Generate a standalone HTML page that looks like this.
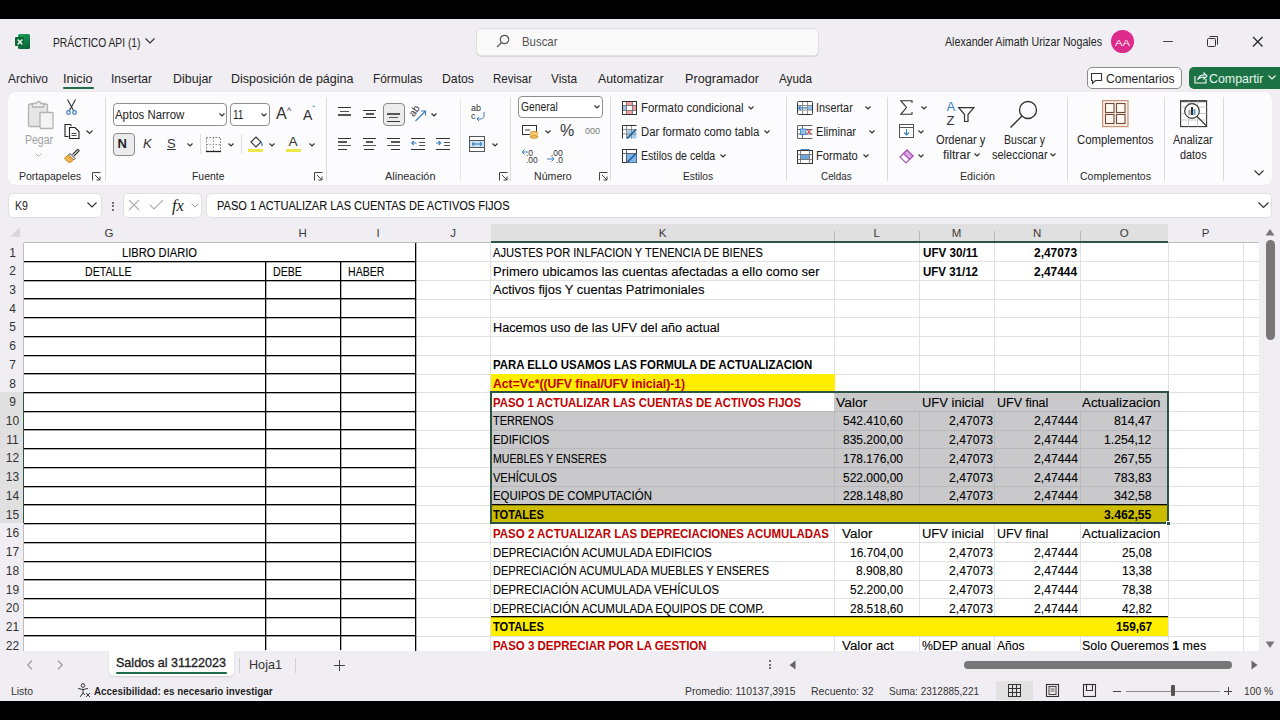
<!DOCTYPE html><html><head><meta charset="utf-8"><style>
*{margin:0;padding:0;box-sizing:border-box}
html,body{width:1280px;height:720px;overflow:hidden;background:#000;font-family:"Liberation Sans",sans-serif;color:#1f1f1f;position:relative}
.a{position:absolute}
.t{position:absolute;white-space:nowrap}
.menu{font-size:13px;color:#242424}
.sep{position:absolute;width:1px;background:#dcdcdc;top:97px;height:84px}
.glab{font-size:11.5px;color:#2b2b2b}
.rt{font-size:12px;color:#242424}
.chev{position:absolute;width:4px;height:4px;border-right:1px solid #555;border-bottom:1px solid #555;transform:rotate(45deg)}
.cell{font-size:12.5px;color:#000;-webkit-text-stroke:0.1px #000}
.b{font-weight:bold;-webkit-text-stroke:0}
.red{color:#c00000}
.sx{display:inline-block;transform-origin:0 50%}
.hdr{position:absolute;top:224px;height:18px;font-size:11.5px;line-height:18px;text-align:center;color:#3a3a3a}
.rn{position:absolute;left:1px;width:23px;font-size:12px;text-align:center;color:#333;line-height:20px}
svg{position:absolute;overflow:visible}
</style></head><body><div class="a" style="left:0;top:19px;width:1280px;height:682px;background:#f0eef2"></div><div class="a" style="left:18px;top:34px;width:12px;height:14.6px;background:linear-gradient(160deg,#1f9a5c 0%,#138a4e 35%,#0f7240 70%,#0b5a30 100%);border-radius:1.5px"></div><div class="a" style="left:15px;top:37px;width:9.2px;height:9px;background:#0c6636;border-radius:1px"></div><svg style="left:17px;top:38.8px" width="6" height="6"><path d="M0.6 0.4L5.4 5.6M5.4 0.4L0.6 5.6" stroke="#e8fff2" stroke-width="1.5"/></svg><div class="t" style="left:52.5px;top:34.5px;line-height:16px;font-size:13px;color:#242424"><span id="f0" class="sx" style="transform:scaleX(0.7916)">PRÁCTICO API (1)</span></div><svg style="left:145px;top:38px" width="10" height="6"><path d="M0.5 0.5L5 5L9.5 0.5" fill="none" stroke="#333" stroke-width="1.2"/></svg><div class="a" style="left:476px;top:27.5px;width:343px;height:28.5px;background:#f9f9f9;border:1px solid #e0e0e0;border-radius:5px;box-shadow:0 1px 0 #d6d6d6"></div><svg style="left:496px;top:34px" width="14" height="14"><circle cx="8.5" cy="5.5" r="4.2" fill="none" stroke="#555" stroke-width="1.2"/><line x1="5.5" y1="8.5" x2="1" y2="13" stroke="#555" stroke-width="1.3"/></svg><div class="t" style="left:522px;top:34px;line-height:16px;font-size:13px;color:#555"><span id="f1" class="sx" style="transform:scaleX(0.8772)">Buscar</span></div><div class="t" style="left:945px;top:34px;line-height:16px;font-size:12.5px;color:#242424"><span id="f2" class="sx" style="transform:scaleX(0.8527)">Alexander Aimath Urizar Nogales</span></div><div class="a" style="left:1111px;top:30px;width:23px;height:23px;border-radius:50%;background:#dd2a8b"></div><div class="t" style="left:1115px;top:35px;line-height:16px;font-size:9.5px;color:#fff"><span id="f3" class="sx" style="transform:scaleX(1.1823)">AA</span></div><div class="a" style="left:1163px;top:40.5px;width:9.5px;height:1.5px;background:#444"></div><div class="a" style="left:1207px;top:38px;width:9px;height:9px;border:1px solid #333;border-radius:1.5px"></div><div class="a" style="left:1209px;top:36px;width:9px;height:9px;border-top:1px solid #333;border-right:1px solid #333;border-radius:1.5px"></div><svg style="left:1253px;top:36.5px" width="10" height="10"><path d="M0 0L9.5 9.5M9.5 0L0 9.5" stroke="#222" stroke-width="1.2"/></svg><div class="t" style="left:8px;top:71px;line-height:16px;font-size:13px;color:#242424"><span id="f4" class="sx" style="transform:scaleX(0.9225)">Archivo</span></div><div class="t" style="left:63px;top:71px;line-height:16px;font-size:13px;color:#242424"><span id="f5" class="sx" style="transform:scaleX(0.9717)">Inicio</span></div><div class="t" style="left:111px;top:71px;line-height:16px;font-size:13px;color:#242424"><span id="f6" class="sx" style="transform:scaleX(0.9302)">Insertar</span></div><div class="t" style="left:172.5px;top:71px;line-height:16px;font-size:13px;color:#242424"><span id="f7" class="sx" style="transform:scaleX(0.9590)">Dibujar</span></div><div class="t" style="left:231px;top:71px;line-height:16px;font-size:13px;color:#242424"><span id="f8" class="sx" style="transform:scaleX(0.9630)">Disposición de página</span></div><div class="t" style="left:373px;top:71px;line-height:16px;font-size:13px;color:#242424"><span id="f9" class="sx" style="transform:scaleX(0.9135)">Fórmulas</span></div><div class="t" style="left:442px;top:71px;line-height:16px;font-size:13px;color:#242424"><span id="f10" class="sx" style="transform:scaleX(0.9420)">Datos</span></div><div class="t" style="left:493px;top:71px;line-height:16px;font-size:13px;color:#242424"><span id="f11" class="sx" style="transform:scaleX(0.8848)">Revisar</span></div><div class="t" style="left:551px;top:71px;line-height:16px;font-size:13px;color:#242424"><span id="f12" class="sx" style="transform:scaleX(0.9068)">Vista</span></div><div class="t" style="left:598px;top:71px;line-height:16px;font-size:13px;color:#242424"><span id="f13" class="sx" style="transform:scaleX(0.9441)">Automatizar</span></div><div class="t" style="left:685px;top:71px;line-height:16px;font-size:13px;color:#242424"><span id="f14" class="sx" style="transform:scaleX(0.9753)">Programador</span></div><div class="t" style="left:779px;top:71px;line-height:16px;font-size:13px;color:#242424"><span id="f15" class="sx" style="transform:scaleX(0.9006)">Ayuda</span></div><div class="a" style="left:63px;top:86.5px;width:31px;height:2.5px;background:#1e6b45;border-radius:1px"></div><div class="a" style="left:1087px;top:67px;width:95px;height:21.5px;background:#fff;border:1px solid #8a8a8a;border-radius:5px"></div><svg style="left:1091px;top:72.5px" width="11" height="11"><path d="M0.5 0.5H10.5V7.5H4.5L1.5 10.5V7.5H0.5Z" fill="none" stroke="#333" stroke-width="1.1"/></svg><div class="t" style="left:1106px;top:71px;line-height:16px;font-size:13px;color:#242424"><span id="f16" class="sx" style="transform:scaleX(0.9294)">Comentarios</span></div><div class="a" style="left:1189px;top:67px;width:95px;height:21.5px;background:#1b7245;border-radius:5px"></div><svg style="left:1194px;top:71px" width="14" height="13"><path d="M1 5V12H12V8M4 8C5 5 8 4 10 4V2L13 5L10 8V6C8 6 6 6.5 4 8Z" fill="none" stroke="#fff" stroke-width="1.1"/></svg><div class="t" style="left:1209px;top:71px;line-height:16px;font-size:13px;color:#e6f7ec"><span id="f17" class="sx" style="transform:scaleX(0.9548)">Compartir</span></div><svg style="left:1268px;top:75px" width="8" height="5"><path d="M0.5 0.5L4 4L7.5 0.5" fill="none" stroke="#fff" stroke-width="1.1"/></svg><div class="a" style="left:7.5px;top:92px;width:1264.5px;height:93.3px;background:#fcfbfd;border-radius:7px;box-shadow:0 0 1px 0 #d0d0d0"></div><div class="sep" style="left:104.5px"></div><div class="sep" style="left:325.5px"></div><div class="sep" style="left:510px"></div><div class="sep" style="left:610px"></div><div class="sep" style="left:785.5px"></div><div class="sep" style="left:886.5px"></div><div class="sep" style="left:1066.5px"></div><div class="sep" style="left:1163.5px"></div><div class="sep" style="left:1222.5px"></div><div class="sep" style="left:459.5px;top:100px;height:80px;background:#e4e4e4"></div><div class="t" style="left:19.25px;top:169px;line-height:14px;font-size:11.5px;color:#2b2b2b"><span id="f18" class="sx" style="transform:scaleX(0.9147)">Portapapeles</span></div><div class="t" style="left:191.75px;top:169px;line-height:14px;font-size:11.5px;color:#2b2b2b"><span id="f19" class="sx" style="transform:scaleX(0.9075)">Fuente</span></div><div class="t" style="left:385px;top:169px;line-height:14px;font-size:11.5px;color:#2b2b2b"><span id="f20" class="sx" style="transform:scaleX(0.9514)">Alineación</span></div><div class="t" style="left:534.25px;top:169px;line-height:14px;font-size:11.5px;color:#2b2b2b"><span id="f21" class="sx" style="transform:scaleX(0.9228)">Número</span></div><div class="t" style="left:683.25px;top:169px;line-height:14px;font-size:11.5px;color:#2b2b2b"><span id="f22" class="sx" style="transform:scaleX(0.8856)">Estilos</span></div><div class="t" style="left:821.25px;top:169px;line-height:14px;font-size:11.5px;color:#2b2b2b"><span id="f23" class="sx" style="transform:scaleX(0.8586)">Celdas</span></div><div class="t" style="left:959.7px;top:169px;line-height:14px;font-size:11.5px;color:#2b2b2b"><span id="f24" class="sx" style="transform:scaleX(0.9279)">Edición</span></div><div class="t" style="left:1080px;top:169px;line-height:14px;font-size:11.5px;color:#2b2b2b"><span id="f25" class="sx" style="transform:scaleX(0.9180)">Complementos</span></div><svg style="left:92px;top:171.5px" width="9" height="9"><path d="M0.5 8.5V0.5H8.5M3 3L8 8M8 4.5V8H4.5" fill="none" stroke="#444" stroke-width="1"/></svg><svg style="left:314px;top:171.5px" width="9" height="9"><path d="M0.5 8.5V0.5H8.5M3 3L8 8M8 4.5V8H4.5" fill="none" stroke="#444" stroke-width="1"/></svg><svg style="left:499px;top:171.5px" width="9" height="9"><path d="M0.5 8.5V0.5H8.5M3 3L8 8M8 4.5V8H4.5" fill="none" stroke="#444" stroke-width="1"/></svg><svg style="left:599px;top:171.5px" width="9" height="9"><path d="M0.5 8.5V0.5H8.5M3 3L8 8M8 4.5V8H4.5" fill="none" stroke="#444" stroke-width="1"/></svg><svg style="left:27px;top:99px" width="28" height="31"><rect x="1.5" y="5" width="19" height="22.5" rx="1.5" fill="#e6e6e6" stroke="#b3b3b3" stroke-width="1.3"/><path d="M5.5 8V4.5H9.5A2 2 0 0 1 13.5 4.5H16.5V8Z" fill="#f2f2f2" stroke="#b3b3b3" stroke-width="1.3"/><rect x="13" y="13.5" width="13" height="16" rx="0.8" fill="#f3f3f3" stroke="#b3b3b3" stroke-width="1.3"/></svg><div class="t" style="left:24.5px;top:133px;line-height:14px;font-size:12px;color:#a0a0a0"><span id="f26" class="sx" style="transform:scaleX(0.8741)">Pegar</span></div><svg style="left:35px;top:153px" width="7" height="4"><path d="M0.5 0.5L3.5 3.5L6.5 0.5" fill="none" stroke="#aaa" stroke-width="1"/></svg><svg style="left:65px;top:99px" width="13" height="17"><path d="M2.5 0.5L8.5 11.5M10.5 0.5L4.5 11.5" stroke="#333" stroke-width="1.1" fill="none"/><circle cx="3.5" cy="13.5" r="1.8" fill="none" stroke="#3a7fc1" stroke-width="1.2"/><circle cx="9.5" cy="13.5" r="1.8" fill="none" stroke="#3a7fc1" stroke-width="1.2"/></svg><svg style="left:63.5px;top:123.5px" width="16" height="16"><path d="M4.5 12.5H1V0.5H6.5L7.5 2" fill="none" stroke="#222" stroke-width="1.1"/><path d="M5.5 3.5H11L15 7.5V14.5H5.5Z" fill="#fff" stroke="#222" stroke-width="1.1"/><path d="M7.5 9.5H12.5M7.5 11.5H12.5" stroke="#333" stroke-width="0.9"/></svg><svg style="left:85.5px;top:130px" width="7" height="4"><path d="M0.5 0.5L3.5 3.5L6.5 0.5" fill="none" stroke="#333" stroke-width="1.1"/></svg><svg style="left:64px;top:148px" width="16" height="15"><path d="M8.5 6.5L13.5 1.5A1.2 1.2 0 0 1 15 3L10 8" fill="#fff" stroke="#333" stroke-width="1.1"/><path d="M6 5.5L11 10.5L9.5 12L4.5 7Z" fill="#fff" stroke="#333" stroke-width="1"/><path d="M0.5 10L4.5 7L9.5 12L6.5 14.5C4 14.5 1.5 12.5 0.5 10Z" fill="#f0b44a" stroke="#c98a2a" stroke-width="0.9"/></svg><div class="a" style="left:112.5px;top:103px;width:114.5px;height:23px;background:#fff;border:1px solid #8f8f8f;border-radius:4px"></div><div class="t" style="left:115px;top:107px;line-height:16px;font-size:12.5px;color:#242424"><span id="f27" class="sx" style="transform:scaleX(0.9144)">Aptos Narrow</span></div><svg style="left:218.5px;top:113.3px" width="6" height="4"><path d="M0.5 0.5L3 3L5.5 0.5" fill="none" stroke="#333" stroke-width="1.2"/></svg><div class="a" style="left:230px;top:103px;width:39.5px;height:23px;background:#fff;border:1px solid #8f8f8f;border-radius:4px"></div><div class="t" style="left:232.5px;top:107px;line-height:16px;font-size:12.5px;color:#242424"><span id="f28" class="sx" style="transform:scaleX(0.8087)">11</span></div><svg style="left:260.5px;top:113.3px" width="6" height="4"><path d="M0.5 0.5L3 3L5.5 0.5" fill="none" stroke="#333" stroke-width="1.2"/></svg><div class="t" style="left:276px;top:105px;font-size:16px;line-height:18px;color:#333">A</div><div class="t" style="left:287px;top:106px;font-size:9px;line-height:10px;color:#333">^</div><div class="t" style="left:303px;top:107px;font-size:14px;line-height:16px;color:#333">A</div><div class="t" style="left:312px;top:106px;font-size:10px;line-height:10px;color:#3a7fc1">ˇ</div><div class="a" style="left:112.5px;top:133px;width:22px;height:22.5px;background:#ececec;border:1px solid #8a8a8a;border-radius:4px"></div><div class="t" style="left:117.5px;top:136px;font-size:13px;line-height:16px;font-weight:bold;color:#222">N</div><div class="t" style="left:143px;top:136px;font-size:13px;line-height:16px;font-style:italic;color:#333">K</div><div class="t" style="left:167px;top:136px;font-size:13px;line-height:16px;text-decoration:underline;color:#333">S</div><svg style="left:186.5px;top:143.3px" width="6" height="4"><path d="M0.5 0.5L3 3L5.5 0.5" fill="none" stroke="#333" stroke-width="1.2"/></svg><div class="a" style="left:200px;top:134px;width:1px;height:20px;background:#ddd"></div><svg style="left:206px;top:137px" width="15" height="15"><rect x="0.5" y="0.5" width="14" height="14" fill="none" stroke="#777" stroke-width="1" stroke-dasharray="1.5 1.5"/><path d="M7.5 0.5V14.5M0.5 7.5H14.5" stroke="#999" stroke-width="1" stroke-dasharray="1.5 1.5"/><path d="M0 14.5H15" stroke="#222" stroke-width="1.3"/></svg><svg style="left:227.5px;top:143.3px" width="6" height="4"><path d="M0.5 0.5L3 3L5.5 0.5" fill="none" stroke="#333" stroke-width="1.2"/></svg><div class="a" style="left:241px;top:134px;width:1px;height:20px;background:#ddd"></div><svg style="left:248px;top:136px" width="16" height="14"><path d="M3 6L8 1L13 6L8 11Z" fill="#fff" stroke="#333" stroke-width="1.1"/><path d="M13 6C14.5 8 14.5 9 13.5 10" stroke="#3a7fc1" stroke-width="1.2" fill="none"/></svg><div class="a" style="left:247.5px;top:148.5px;width:15.5px;height:3.5px;background:#ece84a"></div><svg style="left:268.5px;top:143.3px" width="6" height="4"><path d="M0.5 0.5L3 3L5.5 0.5" fill="none" stroke="#333" stroke-width="1.2"/></svg><div class="t" style="left:288.5px;top:133.5px;font-size:13.5px;line-height:16px;color:#333">A</div><div class="a" style="left:285.5px;top:148.5px;width:15.5px;height:3.5px;background:#ece84a"></div><svg style="left:308.5px;top:143.3px" width="6" height="4"><path d="M0.5 0.5L3 3L5.5 0.5" fill="none" stroke="#333" stroke-width="1.2"/></svg><div class="a" style="left:338px;top:106.6px;width:13px;height:1.4px;background:#333"></div><div class="a" style="left:340px;top:110.5px;width:9px;height:1.4px;background:#555"></div><div class="a" style="left:338px;top:114.3px;width:13px;height:1.4px;background:#555"></div><div class="a" style="left:362.7px;top:109.7px;width:13.3px;height:1.4px;background:#333"></div><div class="a" style="left:366px;top:113.3px;width:8px;height:1.4px;background:#555"></div><div class="a" style="left:362.7px;top:116.9px;width:13.3px;height:1.4px;background:#333"></div><div class="a" style="left:382.5px;top:103px;width:22px;height:22.5px;background:#ececec;border:1px solid #8a8a8a;border-radius:4px"></div><div class="a" style="left:387px;top:113.3px;width:13px;height:1.4px;background:#555"></div><div class="a" style="left:389px;top:116.9px;width:9px;height:1.4px;background:#555"></div><div class="a" style="left:387px;top:120.7px;width:13px;height:1.4px;background:#333"></div><div class="t" style="left:409px;top:106px;font-size:10px;line-height:10px;color:#333;transform:rotate(-55deg)">ab</div><svg style="left:415px;top:110px" width="12" height="12"><path d="M0.5 11L10.5 1M6 1H10.5V5.5" fill="none" stroke="#3a7fc1" stroke-width="1.1"/></svg><svg style="left:431px;top:113.3px" width="6" height="4"><path d="M0.5 0.5L3 3L5.5 0.5" fill="none" stroke="#333" stroke-width="1.2"/></svg><div class="a" style="left:338px;top:137.6px;width:13px;height:1.4px;background:#333"></div><div class="a" style="left:338px;top:141.35px;width:9px;height:1.4px;background:#555"></div><div class="a" style="left:338px;top:145.1px;width:13px;height:1.4px;background:#555"></div><div class="a" style="left:338px;top:148.85px;width:9px;height:1.4px;background:#333"></div><div class="a" style="left:362.7px;top:137.6px;width:13.3px;height:1.4px;background:#333"></div><div class="a" style="left:365.7px;top:141.35px;width:7.5px;height:1.4px;background:#555"></div><div class="a" style="left:362.7px;top:145.1px;width:13.3px;height:1.4px;background:#555"></div><div class="a" style="left:364.2px;top:148.85px;width:9.5px;height:1.4px;background:#333"></div><div class="a" style="left:387px;top:137.6px;width:13px;height:1.4px;background:#333"></div><div class="a" style="left:391px;top:141.35px;width:9px;height:1.4px;background:#555"></div><div class="a" style="left:387px;top:145.1px;width:13px;height:1.4px;background:#555"></div><div class="a" style="left:391px;top:148.85px;width:9px;height:1.4px;background:#333"></div><div class="a" style="left:411px;top:137.6px;width:13.5px;height:1.4px;background:#333"></div><div class="a" style="left:419px;top:141.5px;width:5.5px;height:1.4px;background:#555"></div><div class="a" style="left:419px;top:145px;width:5.5px;height:1.4px;background:#555"></div><div class="a" style="left:411px;top:148.8px;width:13.5px;height:1.4px;background:#333"></div><svg style="left:410.5px;top:139.5px" width="6" height="6"><path d="M5.5 3H0.8M2.8 1L0.8 3L2.8 5" fill="none" stroke="#3a7fc1" stroke-width="1.1"/></svg><div class="a" style="left:436px;top:137.6px;width:13.5px;height:1.4px;background:#333"></div><div class="a" style="left:444px;top:141.5px;width:5.5px;height:1.4px;background:#555"></div><div class="a" style="left:444px;top:145px;width:5.5px;height:1.4px;background:#555"></div><div class="a" style="left:436px;top:148.8px;width:13.5px;height:1.4px;background:#333"></div><svg style="left:435.5px;top:139.5px" width="6" height="6"><path d="M0 3H4.7M2.7 1L4.7 3L2.7 5" fill="none" stroke="#3a7fc1" stroke-width="1.1"/></svg><div class="t" style="left:471px;top:104px;font-size:9px;line-height:9px;color:#333">ab</div><div class="t" style="left:471px;top:112px;font-size:9px;line-height:9px;color:#333">c</div><svg style="left:476px;top:112px" width="10" height="10"><path d="M8 0V4C8 6 6 7 4 7H1M3 5L1 7L3 9" fill="none" stroke="#3a7fc1" stroke-width="1"/></svg><svg style="left:469px;top:136px" width="16" height="16"><rect x="0.5" y="0.5" width="15" height="15" fill="#fff" stroke="#555" stroke-width="1"/><path d="M0.5 4.5H15.5M0.5 11.5H15.5" stroke="#555"/><rect x="1" y="5" width="14" height="6" fill="#cfe3f5"/><path d="M3 8H13M5 6L3 8L5 10M11 6L13 8L11 10" fill="none" stroke="#1f6fb5" stroke-width="1"/></svg><svg style="left:491.5px;top:143.3px" width="6" height="4"><path d="M0.5 0.5L3 3L5.5 0.5" fill="none" stroke="#333" stroke-width="1.2"/></svg><div class="a" style="left:518px;top:96px;width:85px;height:21.5px;background:#fff;border:1px solid #8f8f8f;border-radius:4px"></div><div class="t" style="left:521.25px;top:99px;line-height:16px;font-size:12.5px;color:#242424"><span id="f29" class="sx" style="transform:scaleX(0.8261)">General</span></div><svg style="left:593.5px;top:105.3px" width="6" height="4"><path d="M0.5 0.5L3 3L5.5 0.5" fill="none" stroke="#333" stroke-width="1.2"/></svg><svg style="left:522px;top:124px" width="17" height="14"><rect x="0.5" y="1.5" width="14" height="9" fill="#fff" stroke="#333" stroke-width="1"/><path d="M3 6H8" stroke="#333"/><ellipse cx="12" cy="9" rx="4" ry="1.5" fill="#f6c870" stroke="#c98a1f" stroke-width="0.8"/><rect x="8" y="9" width="8" height="4" fill="#f6c870"/><ellipse cx="12" cy="13" rx="4" ry="1.3" fill="#f6c870" stroke="#c98a1f" stroke-width="0.8"/></svg><svg style="left:544.5px;top:130.3px" width="6" height="4"><path d="M0.5 0.5L3 3L5.5 0.5" fill="none" stroke="#333" stroke-width="1.2"/></svg><div class="t" style="left:560px;top:122px;font-size:16px;line-height:18px;color:#333">%</div><div class="t" style="left:585px;top:126px;font-size:9px;line-height:10px;color:#777">000</div><div class="t" style="left:526px;top:149px;font-size:8.5px;line-height:8px;color:#333">.0</div><div class="t" style="left:526px;top:156px;font-size:8.5px;line-height:8px;color:#333">.00</div><svg style="left:521px;top:148px" width="8" height="8"><path d="M7 4H1M3.5 1.5L1 4L3.5 6.5" fill="none" stroke="#3a7fc1" stroke-width="1"/></svg><div class="t" style="left:551px;top:149px;font-size:8.5px;line-height:8px;color:#333">.00</div><div class="t" style="left:556px;top:156px;font-size:8.5px;line-height:8px;color:#333">.0</div><svg style="left:547px;top:155px" width="9" height="8"><path d="M0 4H7M4.5 1.5L7 4L4.5 6.5" fill="none" stroke="#3a7fc1" stroke-width="1"/></svg><svg style="left:622px;top:100.5px" width="15" height="14"><rect x="0.5" y="0.5" width="14" height="13" fill="#fff"/><rect x="4.5" y="0.5" width="6" height="4" fill="#f0a0a0"/><rect x="4.5" y="9.5" width="6" height="4" fill="#f0a0a0"/><rect x="0.5" y="4.5" width="4" height="5" fill="#9cc3e6"/><rect x="10.5" y="4.5" width="4" height="5" fill="#f0a0a0"/><path d="M0.5 4.5H14.5M0.5 9.5H14.5M4.5 0.5V13.5M10.5 0.5V13.5" stroke="#666" stroke-width="0.8"/><rect x="0.5" y="0.5" width="14" height="13" fill="none" stroke="#333"/></svg><div class="t" style="left:641.25px;top:100px;line-height:16px;font-size:12.5px;color:#242424"><span id="f30" class="sx" style="transform:scaleX(0.9106)">Formato condicional</span></div><svg style="left:747.5px;top:106.3px" width="6" height="4"><path d="M0.5 0.5L3 3L5.5 0.5" fill="none" stroke="#333" stroke-width="1.2"/></svg><svg style="left:622px;top:124.5px" width="15" height="14"><rect x="0.5" y="0.5" width="14" height="13" fill="#fff"/><rect x="5" y="5" width="9.5" height="8.5" fill="#a9cdee"/><path d="M0.5 4.5H14.5M0.5 9H14.5M4.5 0.5V13.5M9.5 0.5V13.5" stroke="#777" stroke-width="0.8"/><path d="M0.5 13.5V0.5H14.5" fill="none" stroke="#333"/><path d="M5 13.5L14 4.5" stroke="#1f5f99" stroke-width="1.6"/></svg><div class="t" style="left:641.25px;top:124px;line-height:16px;font-size:12.5px;color:#242424"><span id="f31" class="sx" style="transform:scaleX(0.9054)">Dar formato como tabla</span></div><svg style="left:763.5px;top:130.3px" width="6" height="4"><path d="M0.5 0.5L3 3L5.5 0.5" fill="none" stroke="#333" stroke-width="1.2"/></svg><svg style="left:622px;top:148.5px" width="15" height="14"><rect x="0.5" y="0.5" width="14" height="13" fill="#fff" stroke="#333"/><rect x="4.5" y="4.5" width="10" height="9" fill="#7fb2e5"/><path d="M4.5 0.5V13.5M0.5 4.5H14.5" stroke="#555" stroke-width="0.9"/><path d="M5 13.5L14 4.5" stroke="#1f5f99" stroke-width="1.6"/></svg><div class="t" style="left:641.25px;top:148px;line-height:16px;font-size:12.5px;color:#242424"><span id="f32" class="sx" style="transform:scaleX(0.8480)">Estilos de celda</span></div><svg style="left:719.5px;top:154.3px" width="6" height="4"><path d="M0.5 0.5L3 3L5.5 0.5" fill="none" stroke="#333" stroke-width="1.2"/></svg><svg style="left:797px;top:100.5px" width="16" height="14"><rect x="0.5" y="0.5" width="15" height="13" fill="#fff"/><rect x="10.5" y="4.5" width="5" height="4.5" fill="#8fc0ea"/><path d="M0.5 4.5H15.5M0.5 9H15.5M5.5 0.5V13.5M10.5 0.5V13.5" stroke="#777" stroke-width="0.8"/><rect x="0.5" y="0.5" width="15" height="13" rx="1" fill="none" stroke="#333"/><path d="M10 6.8H1.5M4 4.3L1.5 6.8L4 9.3" fill="none" stroke="#3a7fc1" stroke-width="1.2"/></svg><div class="t" style="left:816.25px;top:100px;line-height:16px;font-size:12.5px;color:#242424"><span id="f33" class="sx" style="transform:scaleX(0.8669)">Insertar</span></div><svg style="left:864.5px;top:106.3px" width="6" height="4"><path d="M0.5 0.5L3 3L5.5 0.5" fill="none" stroke="#333" stroke-width="1.2"/></svg><svg style="left:797px;top:124.5px" width="16" height="14"><path d="M0.5 0.5H15.5M0.5 13.5H15.5M0.5 4.5H15.5M0.5 9H15.5M0.5 0.5V13.5M5.5 0.5V13.5" stroke="#555" stroke-width="0.9"/><rect x="3.5" y="4" width="5.5" height="5.5" fill="#8fc0ea" stroke="#3a7fc1" stroke-width="0.8"/><path d="M10 4.5L14 9M14 4.5L10 9" stroke="#d13438" stroke-width="1.1"/></svg><div class="t" style="left:816.25px;top:124px;line-height:16px;font-size:12.5px;color:#242424"><span id="f34" class="sx" style="transform:scaleX(0.8858)">Eliminar</span></div><svg style="left:868.5px;top:130.3px" width="6" height="4"><path d="M0.5 0.5L3 3L5.5 0.5" fill="none" stroke="#333" stroke-width="1.2"/></svg><svg style="left:797px;top:148.5px" width="16" height="15"><rect x="0.5" y="1.5" width="15" height="13" fill="#fff" stroke="#333"/><rect x="3.5" y="5.5" width="9" height="5" fill="#6fa8dc"/><path d="M0.5 5.5H15.5M0.5 10.5H15.5M3.5 1.5V14.5M12.5 1.5V14.5" stroke="#666" stroke-width="0.8"/><path d="M3.5 0.5H12.5" stroke="#3a7fc1" stroke-width="0.9"/></svg><div class="t" style="left:816.25px;top:148px;line-height:16px;font-size:12.5px;color:#242424"><span id="f35" class="sx" style="transform:scaleX(0.8969)">Formato</span></div><svg style="left:862.5px;top:154.3px" width="6" height="4"><path d="M0.5 0.5L3 3L5.5 0.5" fill="none" stroke="#333" stroke-width="1.2"/></svg><svg style="left:900px;top:100px" width="13" height="15"><path d="M12 3V0.7H0.8L6.5 7.5L0.8 14.3H12V12" fill="none" stroke="#333" stroke-width="1.1"/></svg><svg style="left:920.5px;top:106.3px" width="6" height="4"><path d="M0.5 0.5L3 3L5.5 0.5" fill="none" stroke="#333" stroke-width="1.2"/></svg><svg style="left:899px;top:124px" width="15" height="14"><rect x="0.5" y="0.5" width="14" height="13" fill="#fff" stroke="#555"/><path d="M0.5 3.5H14.5" stroke="#555"/><path d="M7.5 5V11M5 8.5L7.5 11L10 8.5" fill="none" stroke="#3a7fc1" stroke-width="1.1"/></svg><svg style="left:917.5px;top:130.3px" width="6" height="4"><path d="M0.5 0.5L3 3L5.5 0.5" fill="none" stroke="#333" stroke-width="1.2"/></svg><svg style="left:899px;top:148px" width="16" height="15"><path d="M1 9L8 2L14 8L7 15Z" fill="#fff" stroke="#a34fb5" stroke-width="1.1"/><path d="M4.5 5.5L10.5 11.5L14 8L8 2Z" fill="#dca6e6" stroke="#a34fb5" stroke-width="1.1"/></svg><svg style="left:917.5px;top:154.3px" width="6" height="4"><path d="M0.5 0.5L3 3L5.5 0.5" fill="none" stroke="#333" stroke-width="1.2"/></svg><div class="t" style="left:946.5px;top:100px;font-size:13px;line-height:13px;color:#3a7fc1">A</div><div class="t" style="left:946.5px;top:114px;font-size:13px;line-height:13px;color:#333">Z</div><svg style="left:958px;top:107px" width="17" height="16"><path d="M0.7 0.7H15.8L10 7.5V14.5H6.5V7.5Z" fill="none" stroke="#333" stroke-width="1.2"/></svg><div class="t" style="left:936.25px;top:132px;line-height:16px;font-size:12.5px;color:#242424"><span id="f36" class="sx" style="transform:scaleX(0.8877)">Ordenar y</span></div><div class="t" style="left:942.5px;top:147px;line-height:16px;font-size:12.5px;color:#242424"><span id="f37" class="sx" style="transform:scaleX(0.9899)">filtrar</span></div><svg style="left:973.5px;top:153.3px" width="6" height="4"><path d="M0.5 0.5L3 3L5.5 0.5" fill="none" stroke="#333" stroke-width="1.2"/></svg><svg style="left:1009px;top:100px" width="30" height="29"><circle cx="19" cy="10" r="8.5" fill="none" stroke="#333" stroke-width="1.3"/><path d="M13 16L1.5 27.5" stroke="#333" stroke-width="1.4"/></svg><div class="t" style="left:1004px;top:132px;line-height:16px;font-size:12.5px;color:#242424"><span id="f38" class="sx" style="transform:scaleX(0.8429)">Buscar y</span></div><div class="t" style="left:991.6px;top:147px;line-height:16px;font-size:12.5px;color:#242424"><span id="f39" class="sx" style="transform:scaleX(0.8793)">seleccionar</span></div><svg style="left:1049.5px;top:153.3px" width="6" height="4"><path d="M0.5 0.5L3 3L5.5 0.5" fill="none" stroke="#333" stroke-width="1.2"/></svg><svg style="left:1102px;top:100px" width="27" height="27"><rect x="0.6" y="0.6" width="25.4" height="26" fill="#fbefe6" stroke="#c28a6c" stroke-width="1.1"/><rect x="3.5" y="3.5" width="8.5" height="9" fill="#fff9f2" stroke="#6e4a3a" stroke-width="1.1"/><rect x="14.5" y="3.5" width="8.5" height="9" fill="#fff9f2" stroke="#6e4a3a" stroke-width="1.1"/><rect x="3.5" y="14.5" width="8.5" height="9" fill="#fff9f2" stroke="#6e4a3a" stroke-width="1.1"/><rect x="14.5" y="14.5" width="8.5" height="9" fill="#fff9f2" stroke="#6e4a3a" stroke-width="1.1"/></svg><div class="t" style="left:1076.9px;top:132px;line-height:16px;font-size:12.5px;color:#242424"><span id="f40" class="sx" style="transform:scaleX(0.9099)">Complementos</span></div><svg style="left:1179.5px;top:100px" width="28" height="28"><rect x="0.6" y="0.6" width="26" height="26" fill="#fff" stroke="#333" stroke-width="1.1"/><path d="M0.6 1.2H26.6" stroke="#555" stroke-width="2"/><path d="M0.6 7H26.6M0.6 13.5H26.6M0.6 20H26.6M8.5 1V26.6M17.5 1V26.6" stroke="#bdbdbd" stroke-width="0.8"/><circle cx="12" cy="11" r="7.3" fill="#fff" stroke="#333" stroke-width="1.2"/><rect x="8.5" y="10" width="2" height="5" fill="#999"/><rect x="11" y="7" width="2" height="8" fill="#333"/><rect x="13.5" y="9" width="2" height="6" fill="#5a9bd4"/><path d="M17.2 16.5L26.6 26.2" stroke="#333" stroke-width="1.2"/></svg><div class="t" style="left:1173px;top:132px;line-height:16px;font-size:12.5px;color:#242424"><span id="f41" class="sx" style="transform:scaleX(0.8811)">Analizar</span></div><div class="t" style="left:1180px;top:147px;line-height:16px;font-size:12.5px;color:#242424"><span id="f42" class="sx" style="transform:scaleX(0.8695)">datos</span></div><svg style="left:1254px;top:170px" width="10" height="6"><path d="M0.5 0.5L5 5L9.5 0.5" fill="none" stroke="#333" stroke-width="1.2"/></svg><div class="a" style="left:8px;top:193px;width:94px;height:24.5px;background:#fff;border:1px solid #e0e0e0;border-radius:5px"></div><div class="t" style="left:15px;top:199px;line-height:15px;font-size:12.5px;color:#1f1f1f"><span id="f43" class="sx" style="transform:scaleX(0.8498)">K9</span></div><svg style="left:87px;top:202px" width="10" height="6"><path d="M0.5 0.5L5 5L9.5 0.5" fill="none" stroke="#333" stroke-width="1.2"/></svg><div class="a" style="left:111.5px;top:201.5px;width:2px;height:2px;background:#444;border-radius:1px"></div><div class="a" style="left:111.5px;top:205.1px;width:2px;height:2px;background:#444;border-radius:1px"></div><div class="a" style="left:111.5px;top:208.7px;width:2px;height:2px;background:#444;border-radius:1px"></div><div class="a" style="left:123px;top:193px;width:78.5px;height:24.5px;background:#fff;border:1px solid #e0e0e0;border-radius:5px"></div><svg style="left:128px;top:199px" width="12" height="12"><path d="M1 1L11 11M11 1L1 11" stroke="#b0b0b0" stroke-width="1.1"/></svg><svg style="left:149px;top:199px" width="15" height="12"><path d="M1 6L5 10L14 1" fill="none" stroke="#b0b0b0" stroke-width="1.1"/></svg><div class="t" style="left:172px;top:197px;font-family:'Liberation Serif',serif;font-style:italic;font-size:16.5px;line-height:17px;color:#222">fx</div><svg style="left:191px;top:203px" width="8" height="5"><path d="M0.5 0.5L4 4L7.5 0.5" fill="none" stroke="#999" stroke-width="1"/></svg><div class="a" style="left:206px;top:193px;width:1066px;height:24.5px;background:#fff;border:1px solid #e0e0e0;border-radius:5px"></div><div class="t cell" style="left:216.5px;top:198.5px;line-height:15px;font-size:12.5px;color:#111"><span id="f44" class="sx" style="transform:scaleX(0.8822)">PASO 1 ACTUALIZAR LAS CUENTAS DE ACTIVOS FIJOS</span></div><svg style="left:1258px;top:202px" width="11" height="6"><path d="M0.5 0.5L5.5 5.5L10.5 0.5" fill="none" stroke="#333" stroke-width="1.2"/></svg><svg style="left:9px;top:226px" width="12" height="12"><path d="M11 1V11H1Z" fill="#d8d8d8"/></svg><div class="a" style="left:24px;top:242.5px;width:1235px;height:408.0px;background:#fff"></div><div class="a" style="left:490.5px;top:224px;width:677.5px;height:18.5px;background:#e0e0e0"></div><div class="a" style="left:490.5px;top:241px;width:677.5px;height:2px;background:#2d5443"></div><div class="a" style="left:24px;top:242px;width:466.5px;height:1px;background:#bdbdbd"></div><div class="a" style="left:1168px;top:242px;width:91px;height:1px;background:#bdbdbd"></div><div class="a" style="left:834.0px;top:231px;width:1px;height:10px;background:#b8b8b8"></div><div class="a" style="left:918.5px;top:231px;width:1px;height:10px;background:#b8b8b8"></div><div class="a" style="left:993.5px;top:231px;width:1px;height:10px;background:#b8b8b8"></div><div class="a" style="left:1080.0px;top:231px;width:1px;height:10px;background:#b8b8b8"></div><div class="hdr" style="left:-47px;width:312px">G</div><div class="hdr" style="left:265px;width:75.5px">H</div><div class="hdr" style="left:340.5px;width:75.0px">I</div><div class="hdr" style="left:415.5px;width:75.0px">J</div><div class="hdr" style="left:490.5px;width:344.0px">K</div><div class="hdr" style="left:834.5px;width:84.5px">L</div><div class="hdr" style="left:919px;width:75px">M</div><div class="hdr" style="left:994px;width:86.5px">N</div><div class="hdr" style="left:1080.5px;width:87.5px">O</div><div class="hdr" style="left:1168px;width:75px">P</div><div class="a" style="left:23px;top:242.5px;width:1px;height:408.0px;background:#bdbdbd"></div><div class="rn" style="top:242.5px">1</div><div class="rn" style="top:261.23px">2</div><div class="rn" style="top:279.95px">3</div><div class="rn" style="top:298.68px">4</div><div class="rn" style="top:317.4px">5</div><div class="rn" style="top:336.12px">6</div><div class="rn" style="top:354.85px">7</div><div class="rn" style="top:373.58px">8</div><div class="a" style="left:0;top:392.3px;width:23px;height:18.75px;background:#e0e0e0"></div><div class="rn" style="top:392.3px">9</div><div class="a" style="left:0;top:411.02px;width:23px;height:18.75px;background:#e0e0e0"></div><div class="rn" style="top:411.02px">10</div><div class="a" style="left:0;top:429.75px;width:23px;height:18.75px;background:#e0e0e0"></div><div class="rn" style="top:429.75px">11</div><div class="a" style="left:0;top:448.48px;width:23px;height:18.75px;background:#e0e0e0"></div><div class="rn" style="top:448.48px">12</div><div class="a" style="left:0;top:467.2px;width:23px;height:18.75px;background:#e0e0e0"></div><div class="rn" style="top:467.2px">13</div><div class="a" style="left:0;top:485.93px;width:23px;height:18.75px;background:#e0e0e0"></div><div class="rn" style="top:485.93px">14</div><div class="a" style="left:0;top:504.65px;width:23px;height:18.75px;background:#e0e0e0"></div><div class="rn" style="top:504.65px">15</div><div class="rn" style="top:523.38px">16</div><div class="rn" style="top:542.1px">17</div><div class="rn" style="top:560.83px">18</div><div class="rn" style="top:579.55px">19</div><div class="rn" style="top:598.28px">20</div><div class="rn" style="top:617px">21</div><div class="rn" style="top:635.73px">22</div><div class="a" style="left:22.5px;top:392.3px;width:1.8px;height:131.08px;background:#2d5443"></div><div class="a" style="left:24px;top:261px;width:1235px;height:1px;background:#e1e1e1"></div><div class="a" style="left:24px;top:280px;width:1235px;height:1px;background:#e1e1e1"></div><div class="a" style="left:24px;top:299px;width:1235px;height:1px;background:#e1e1e1"></div><div class="a" style="left:24px;top:317px;width:1235px;height:1px;background:#e1e1e1"></div><div class="a" style="left:24px;top:336px;width:1235px;height:1px;background:#e1e1e1"></div><div class="a" style="left:24px;top:355px;width:1235px;height:1px;background:#e1e1e1"></div><div class="a" style="left:24px;top:374px;width:1235px;height:1px;background:#e1e1e1"></div><div class="a" style="left:24px;top:392px;width:1235px;height:1px;background:#e1e1e1"></div><div class="a" style="left:24px;top:411px;width:1235px;height:1px;background:#e1e1e1"></div><div class="a" style="left:24px;top:430px;width:1235px;height:1px;background:#e1e1e1"></div><div class="a" style="left:24px;top:448px;width:1235px;height:1px;background:#e1e1e1"></div><div class="a" style="left:24px;top:467px;width:1235px;height:1px;background:#e1e1e1"></div><div class="a" style="left:24px;top:486px;width:1235px;height:1px;background:#e1e1e1"></div><div class="a" style="left:24px;top:505px;width:1235px;height:1px;background:#e1e1e1"></div><div class="a" style="left:24px;top:523px;width:1235px;height:1px;background:#e1e1e1"></div><div class="a" style="left:24px;top:542px;width:1235px;height:1px;background:#e1e1e1"></div><div class="a" style="left:24px;top:561px;width:1235px;height:1px;background:#e1e1e1"></div><div class="a" style="left:24px;top:580px;width:1235px;height:1px;background:#e1e1e1"></div><div class="a" style="left:24px;top:598px;width:1235px;height:1px;background:#e1e1e1"></div><div class="a" style="left:24px;top:617px;width:1235px;height:1px;background:#e1e1e1"></div><div class="a" style="left:24px;top:636px;width:1235px;height:1px;background:#e1e1e1"></div><div class="a" style="left:24px;top:654px;width:1235px;height:1px;background:#e1e1e1"></div><div class="a" style="left:264.5px;top:242.5px;width:1px;height:408px;background:#e1e1e1"></div><div class="a" style="left:340px;top:242.5px;width:1px;height:408px;background:#e1e1e1"></div><div class="a" style="left:415px;top:242.5px;width:1px;height:408px;background:#e1e1e1"></div><div class="a" style="left:490px;top:242.5px;width:1px;height:408px;background:#e1e1e1"></div><div class="a" style="left:834px;top:242.5px;width:1px;height:408px;background:#e1e1e1"></div><div class="a" style="left:918.5px;top:242.5px;width:1px;height:408px;background:#e1e1e1"></div><div class="a" style="left:993.5px;top:242.5px;width:1px;height:408px;background:#e1e1e1"></div><div class="a" style="left:1080px;top:242.5px;width:1px;height:408px;background:#e1e1e1"></div><div class="a" style="left:1167.5px;top:242.5px;width:1px;height:408px;background:#e1e1e1"></div><div class="a" style="left:1242.5px;top:242.5px;width:1px;height:408px;background:#e1e1e1"></div><div class="a" style="left:490.5px;top:373.58px;width:344px;height:18.73px;background:#ffee00"></div><div class="a" style="left:490.5px;top:392.3px;width:677.5px;height:112.35px;background:#c9c9cb"></div><div class="a" style="left:491px;top:393.3px;width:343px;height:17.73px;background:#fff"></div><div class="a" style="left:490.5px;top:504.65px;width:677.5px;height:18.72px;background:#ccbc00"></div><div class="a" style="left:490.5px;top:617px;width:677.5px;height:18.73px;background:#ffee00"></div><div class="a" style="left:490.5px;top:411px;width:677.5px;height:1px;background:#b9b9bb"></div><div class="a" style="left:490.5px;top:430px;width:677.5px;height:1px;background:#b9b9bb"></div><div class="a" style="left:490.5px;top:448px;width:677.5px;height:1px;background:#b9b9bb"></div><div class="a" style="left:490.5px;top:467px;width:677.5px;height:1px;background:#b9b9bb"></div><div class="a" style="left:490.5px;top:486px;width:677.5px;height:1px;background:#b9b9bb"></div><div class="a" style="left:834px;top:411.02px;width:1px;height:93.62px;background:#b9b9bb"></div><div class="a" style="left:918.5px;top:411.02px;width:1px;height:93.62px;background:#b9b9bb"></div><div class="a" style="left:993.5px;top:411.02px;width:1px;height:93.62px;background:#b9b9bb"></div><div class="a" style="left:1080px;top:411.02px;width:1px;height:93.62px;background:#b9b9bb"></div><div class="a" style="left:24px;top:243px;width:390px;height:17.73px;background:#fff"></div><div class="a" style="left:24px;top:261px;width:392px;height:1px;background:#000"></div><div class="a" style="left:24px;top:262px;width:392px;height:1px;background:rgba(0,0,0,0.3)"></div><div class="a" style="left:24px;top:280px;width:392px;height:1px;background:#000"></div><div class="a" style="left:24px;top:281px;width:392px;height:1px;background:rgba(0,0,0,0.3)"></div><div class="a" style="left:24px;top:298px;width:392px;height:1px;background:#000"></div><div class="a" style="left:24px;top:299px;width:392px;height:1px;background:rgba(0,0,0,0.3)"></div><div class="a" style="left:24px;top:317px;width:392px;height:1px;background:#000"></div><div class="a" style="left:24px;top:318px;width:392px;height:1px;background:rgba(0,0,0,0.3)"></div><div class="a" style="left:24px;top:336px;width:392px;height:1px;background:#000"></div><div class="a" style="left:24px;top:337px;width:392px;height:1px;background:rgba(0,0,0,0.3)"></div><div class="a" style="left:24px;top:355px;width:392px;height:1px;background:#000"></div><div class="a" style="left:24px;top:356px;width:392px;height:1px;background:rgba(0,0,0,0.3)"></div><div class="a" style="left:24px;top:373px;width:392px;height:1px;background:#000"></div><div class="a" style="left:24px;top:374px;width:392px;height:1px;background:rgba(0,0,0,0.3)"></div><div class="a" style="left:24px;top:392px;width:392px;height:1px;background:#000"></div><div class="a" style="left:24px;top:393px;width:392px;height:1px;background:rgba(0,0,0,0.3)"></div><div class="a" style="left:24px;top:411px;width:392px;height:1px;background:#000"></div><div class="a" style="left:24px;top:412px;width:392px;height:1px;background:rgba(0,0,0,0.3)"></div><div class="a" style="left:24px;top:429px;width:392px;height:1px;background:#000"></div><div class="a" style="left:24px;top:430px;width:392px;height:1px;background:rgba(0,0,0,0.3)"></div><div class="a" style="left:24px;top:448px;width:392px;height:1px;background:#000"></div><div class="a" style="left:24px;top:449px;width:392px;height:1px;background:rgba(0,0,0,0.3)"></div><div class="a" style="left:24px;top:467px;width:392px;height:1px;background:#000"></div><div class="a" style="left:24px;top:468px;width:392px;height:1px;background:rgba(0,0,0,0.3)"></div><div class="a" style="left:24px;top:486px;width:392px;height:1px;background:#000"></div><div class="a" style="left:24px;top:487px;width:392px;height:1px;background:rgba(0,0,0,0.3)"></div><div class="a" style="left:24px;top:504px;width:392px;height:1px;background:#000"></div><div class="a" style="left:24px;top:505px;width:392px;height:1px;background:rgba(0,0,0,0.3)"></div><div class="a" style="left:24px;top:523px;width:392px;height:1px;background:#000"></div><div class="a" style="left:24px;top:524px;width:392px;height:1px;background:rgba(0,0,0,0.3)"></div><div class="a" style="left:24px;top:542px;width:392px;height:1px;background:#000"></div><div class="a" style="left:24px;top:543px;width:392px;height:1px;background:rgba(0,0,0,0.3)"></div><div class="a" style="left:24px;top:561px;width:392px;height:1px;background:#000"></div><div class="a" style="left:24px;top:562px;width:392px;height:1px;background:rgba(0,0,0,0.3)"></div><div class="a" style="left:24px;top:579px;width:392px;height:1px;background:#000"></div><div class="a" style="left:24px;top:580px;width:392px;height:1px;background:rgba(0,0,0,0.3)"></div><div class="a" style="left:24px;top:598px;width:392px;height:1px;background:#000"></div><div class="a" style="left:24px;top:599px;width:392px;height:1px;background:rgba(0,0,0,0.3)"></div><div class="a" style="left:24px;top:617px;width:392px;height:1px;background:#000"></div><div class="a" style="left:24px;top:618px;width:392px;height:1px;background:rgba(0,0,0,0.3)"></div><div class="a" style="left:24px;top:635px;width:392px;height:1px;background:#000"></div><div class="a" style="left:24px;top:636px;width:392px;height:1px;background:rgba(0,0,0,0.3)"></div><div class="a" style="left:415px;top:242.5px;width:1px;height:408px;background:#000"></div><div class="a" style="left:416px;top:242.5px;width:1px;height:408px;background:rgba(0,0,0,0.3)"></div><div class="a" style="left:265px;top:261.23px;width:1px;height:389.27px;background:#000"></div><div class="a" style="left:266px;top:261.23px;width:1px;height:389.27px;background:rgba(0,0,0,0.3)"></div><div class="a" style="left:340px;top:261.23px;width:1px;height:389.27px;background:#000"></div><div class="a" style="left:341px;top:261.23px;width:1px;height:389.27px;background:rgba(0,0,0,0.3)"></div><div class="a" style="left:490.5px;top:504px;width:677.5px;height:1px;background:#000"></div><div class="a" style="left:490.5px;top:505px;width:677.5px;height:1px;background:rgba(0,0,0,0.3)"></div><div class="a" style="left:490.5px;top:616px;width:677.5px;height:1px;background:#000"></div><div class="a" style="left:490.5px;top:617px;width:677.5px;height:1px;background:rgba(0,0,0,0.3)"></div><div class="t cell " style="left:122px;top:243.9px;line-height:18.75px;"><span id="f45" class="sx" style="transform:scaleX(0.8924)">LIBRO DIARIO</span></div><div class="t cell " style="left:84.8px;top:262.62px;line-height:18.75px;"><span id="f46" class="sx" style="transform:scaleX(0.8508)">DETALLE</span></div><div class="t cell " style="left:273px;top:262.62px;line-height:18.75px;"><span id="f47" class="sx" style="transform:scaleX(0.8488)">DEBE</span></div><div class="t cell " style="left:348px;top:262.62px;line-height:18.75px;"><span id="f48" class="sx" style="transform:scaleX(0.8450)">HABER</span></div><div class="t cell " style="left:493px;top:243.9px;line-height:18.75px;"><span id="f49" class="sx" style="transform:scaleX(0.8891)">AJUSTES POR INLFACION Y TENENCIA DE BIENES</span></div><div class="t cell b" style="left:923px;top:243.9px;line-height:18.75px;"><span id="f50" class="sx" style="transform:scaleX(0.9310)">UFV 30/11</span></div><div class="t cell b" style="left:1034.4px;top:243.9px;line-height:18.75px;"><span id="f51" class="sx" style="transform:scaleX(0.9538)">2,47073</span></div><div class="t cell " style="left:493px;top:262.62px;line-height:18.75px;"><span id="f52" class="sx" style="transform:scaleX(1.0423)">Primero ubicamos las cuentas afectadas a ello como ser</span></div><div class="t cell b" style="left:923px;top:262.62px;line-height:18.75px;"><span id="f53" class="sx" style="transform:scaleX(0.9203)">UFV 31/12</span></div><div class="t cell b" style="left:1034.4px;top:262.62px;line-height:18.75px;"><span id="f54" class="sx" style="transform:scaleX(0.9538)">2,47444</span></div><div class="t cell " style="left:493px;top:281.35px;line-height:18.75px;"><span id="f55" class="sx" style="transform:scaleX(1.0372)">Activos fijos Y cuentas Patrimoniales</span></div><div class="t cell " style="left:493px;top:318.8px;line-height:18.75px;"><span id="f56" class="sx" style="transform:scaleX(1.0159)">Hacemos uso de las UFV del año actual</span></div><div class="t cell b" style="left:493px;top:356.25px;line-height:18.75px;"><span id="f57" class="sx" style="transform:scaleX(0.9127)">PARA ELLO USAMOS LAS FORMULA DE ACTUALIZACION</span></div><div class="t cell b red" style="left:493px;top:374.98px;line-height:18.75px;"><span id="f58" class="sx" style="transform:scaleX(0.9756)">Act=Vc*((UFV final/UFV inicial)-1)</span></div><div class="t cell b red" style="left:493px;top:393.7px;line-height:18.75px;"><span id="f59" class="sx" style="transform:scaleX(0.9088)">PASO 1 ACTUALIZAR LAS CUENTAS DE ACTIVOS FIJOS</span></div><div class="t cell " style="left:836.3px;top:393.7px;line-height:18.75px;"><span id="f60" class="sx" style="transform:scaleX(1.1074)">Valor</span></div><div class="t cell " style="left:922px;top:393.7px;line-height:18.75px;"><span id="f61" class="sx" style="transform:scaleX(1.0377)">UFV inicial</span></div><div class="t cell " style="left:997.4px;top:393.7px;line-height:18.75px;"><span id="f62" class="sx" style="transform:scaleX(0.9979)">UFV final</span></div><div class="t cell " style="left:1082px;top:393.7px;line-height:18.75px;"><span id="f63" class="sx" style="transform:scaleX(1.0658)">Actualizacion</span></div><div class="t cell " style="left:493px;top:412.42px;line-height:18.75px;"><span id="f64" class="sx" style="transform:scaleX(0.8697)">TERRENOS</span></div><div class="t cell " style="left:843px;top:412.42px;line-height:18.75px;"><span id="f65" class="sx" style="transform:scaleX(0.9590)">542.410,60</span></div><div class="t cell " style="left:948.5px;top:412.42px;line-height:18.75px;"><span id="f66" class="sx" style="transform:scaleX(0.9715)">2,47073</span></div><div class="t cell " style="left:1034px;top:412.42px;line-height:18.75px;"><span id="f67" class="sx" style="transform:scaleX(0.9737)">2,47444</span></div><div class="t cell " style="left:1114px;top:412.42px;line-height:18.75px;"><span id="f68" class="sx" style="transform:scaleX(0.9860)">814,47</span></div><div class="t cell " style="left:493px;top:431.15px;line-height:18.75px;"><span id="f69" class="sx" style="transform:scaleX(0.9022)">EDIFICIOS</span></div><div class="t cell " style="left:843px;top:431.15px;line-height:18.75px;"><span id="f70" class="sx" style="transform:scaleX(0.9590)">835.200,00</span></div><div class="t cell " style="left:948.5px;top:431.15px;line-height:18.75px;"><span id="f71" class="sx" style="transform:scaleX(0.9715)">2,47073</span></div><div class="t cell " style="left:1034px;top:431.15px;line-height:18.75px;"><span id="f72" class="sx" style="transform:scaleX(0.9737)">2,47444</span></div><div class="t cell " style="left:1104.3px;top:431.15px;line-height:18.75px;"><span id="f73" class="sx" style="transform:scaleX(0.9739)">1.254,12</span></div><div class="t cell " style="left:493px;top:449.88px;line-height:18.75px;"><span id="f74" class="sx" style="transform:scaleX(0.8457)">MUEBLES Y ENSERES</span></div><div class="t cell " style="left:843px;top:449.88px;line-height:18.75px;"><span id="f75" class="sx" style="transform:scaleX(0.9590)">178.176,00</span></div><div class="t cell " style="left:948.5px;top:449.88px;line-height:18.75px;"><span id="f76" class="sx" style="transform:scaleX(0.9715)">2,47073</span></div><div class="t cell " style="left:1034px;top:449.88px;line-height:18.75px;"><span id="f77" class="sx" style="transform:scaleX(0.9737)">2,47444</span></div><div class="t cell " style="left:1114px;top:449.88px;line-height:18.75px;"><span id="f78" class="sx" style="transform:scaleX(0.9860)">267,55</span></div><div class="t cell " style="left:493px;top:468.6px;line-height:18.75px;"><span id="f79" class="sx" style="transform:scaleX(0.8844)">VEHÍCULOS</span></div><div class="t cell " style="left:843px;top:468.6px;line-height:18.75px;"><span id="f80" class="sx" style="transform:scaleX(0.9590)">522.000,00</span></div><div class="t cell " style="left:948.5px;top:468.6px;line-height:18.75px;"><span id="f81" class="sx" style="transform:scaleX(0.9715)">2,47073</span></div><div class="t cell " style="left:1034px;top:468.6px;line-height:18.75px;"><span id="f82" class="sx" style="transform:scaleX(0.9737)">2,47444</span></div><div class="t cell " style="left:1114px;top:468.6px;line-height:18.75px;"><span id="f83" class="sx" style="transform:scaleX(0.9860)">783,83</span></div><div class="t cell " style="left:493px;top:487.32px;line-height:18.75px;"><span id="f84" class="sx" style="transform:scaleX(0.9127)">EQUIPOS DE COMPUTACIÓN</span></div><div class="t cell " style="left:843px;top:487.32px;line-height:18.75px;"><span id="f85" class="sx" style="transform:scaleX(0.9590)">228.148,80</span></div><div class="t cell " style="left:948.5px;top:487.32px;line-height:18.75px;"><span id="f86" class="sx" style="transform:scaleX(0.9715)">2,47073</span></div><div class="t cell " style="left:1034px;top:487.32px;line-height:18.75px;"><span id="f87" class="sx" style="transform:scaleX(0.9737)">2,47444</span></div><div class="t cell " style="left:1114px;top:487.32px;line-height:18.75px;"><span id="f88" class="sx" style="transform:scaleX(0.9860)">342,58</span></div><div class="t cell b" style="left:493px;top:506.05px;line-height:18.75px;"><span id="f89" class="sx" style="transform:scaleX(0.8918)">TOTALES</span></div><div class="t cell b" style="left:1104.3px;top:506.05px;line-height:18.75px;"><span id="f90" class="sx" style="transform:scaleX(0.9739)">3.462,55</span></div><div class="t cell b red" style="left:493px;top:524.77px;line-height:18.75px;"><span id="f91" class="sx" style="transform:scaleX(0.9192)">PASO 2 ACTUALIZAR LAS DEPRECIACIONES ACUMULADAS</span></div><div class="t cell " style="left:841.6px;top:524.77px;line-height:18.75px;"><span id="f92" class="sx" style="transform:scaleX(1.0755)">Valor</span></div><div class="t cell " style="left:922px;top:524.77px;line-height:18.75px;"><span id="f93" class="sx" style="transform:scaleX(1.0377)">UFV inicial</span></div><div class="t cell " style="left:997.4px;top:524.77px;line-height:18.75px;"><span id="f94" class="sx" style="transform:scaleX(0.9979)">UFV final</span></div><div class="t cell " style="left:1082px;top:524.77px;line-height:18.75px;"><span id="f95" class="sx" style="transform:scaleX(1.0658)">Actualizacion</span></div><div class="t cell " style="left:493px;top:543.5px;line-height:18.75px;"><span id="f96" class="sx" style="transform:scaleX(0.9056)">DEPRECIACIÓN ACUMULADA EDIFICIOS</span></div><div class="t cell " style="left:850px;top:543.5px;line-height:18.75px;"><span id="f97" class="sx" style="transform:scaleX(0.9549)">16.704,00</span></div><div class="t cell " style="left:948.5px;top:543.5px;line-height:18.75px;"><span id="f98" class="sx" style="transform:scaleX(0.9715)">2,47073</span></div><div class="t cell " style="left:1034px;top:543.5px;line-height:18.75px;"><span id="f99" class="sx" style="transform:scaleX(0.9737)">2,47444</span></div><div class="t cell " style="left:1121.8px;top:543.5px;line-height:18.75px;"><span id="f100" class="sx" style="transform:scaleX(0.9558)">25,08</span></div><div class="t cell " style="left:493px;top:562.23px;line-height:18.75px;"><span id="f101" class="sx" style="transform:scaleX(0.8803)">DEPRECIACIÓN ACUMULADA MUEBLES Y ENSERES</span></div><div class="t cell " style="left:856.4px;top:562.23px;line-height:18.75px;"><span id="f102" class="sx" style="transform:scaleX(0.9595)">8.908,80</span></div><div class="t cell " style="left:948.5px;top:562.23px;line-height:18.75px;"><span id="f103" class="sx" style="transform:scaleX(0.9715)">2,47073</span></div><div class="t cell " style="left:1034px;top:562.23px;line-height:18.75px;"><span id="f104" class="sx" style="transform:scaleX(0.9737)">2,47444</span></div><div class="t cell " style="left:1121.8px;top:562.23px;line-height:18.75px;"><span id="f105" class="sx" style="transform:scaleX(0.9558)">13,38</span></div><div class="t cell " style="left:493px;top:580.95px;line-height:18.75px;"><span id="f106" class="sx" style="transform:scaleX(0.8988)">DEPRECIACIÓN ACUMULADA VEHÍCULOS</span></div><div class="t cell " style="left:850px;top:580.95px;line-height:18.75px;"><span id="f107" class="sx" style="transform:scaleX(0.9549)">52.200,00</span></div><div class="t cell " style="left:948.5px;top:580.95px;line-height:18.75px;"><span id="f108" class="sx" style="transform:scaleX(0.9715)">2,47073</span></div><div class="t cell " style="left:1034px;top:580.95px;line-height:18.75px;"><span id="f109" class="sx" style="transform:scaleX(0.9737)">2,47444</span></div><div class="t cell " style="left:1121.8px;top:580.95px;line-height:18.75px;"><span id="f110" class="sx" style="transform:scaleX(0.9558)">78,38</span></div><div class="t cell " style="left:493px;top:599.68px;line-height:18.75px;"><span id="f111" class="sx" style="transform:scaleX(0.9051)">DEPRECIACIÓN ACUMULADA EQUIPOS DE COMP.</span></div><div class="t cell " style="left:850px;top:599.68px;line-height:18.75px;"><span id="f112" class="sx" style="transform:scaleX(0.9549)">28.518,60</span></div><div class="t cell " style="left:948.5px;top:599.68px;line-height:18.75px;"><span id="f113" class="sx" style="transform:scaleX(0.9715)">2,47073</span></div><div class="t cell " style="left:1034px;top:599.68px;line-height:18.75px;"><span id="f114" class="sx" style="transform:scaleX(0.9737)">2,47444</span></div><div class="t cell " style="left:1121.8px;top:599.68px;line-height:18.75px;"><span id="f115" class="sx" style="transform:scaleX(0.9558)">42,82</span></div><div class="t cell b" style="left:493px;top:618.4px;line-height:18.75px;"><span id="f116" class="sx" style="transform:scaleX(0.8918)">TOTALES</span></div><div class="t cell b" style="left:1115.5px;top:618.4px;line-height:18.75px;"><span id="f117" class="sx" style="transform:scaleX(0.9468)">159,67</span></div><div class="t cell b red" style="left:493px;top:637.12px;line-height:18.75px;"><span id="f118" class="sx" style="transform:scaleX(0.9208)">PASO 3 DEPRECIAR POR LA GESTION</span></div><div class="t cell " style="left:841.6px;top:637.12px;line-height:18.75px;"><span id="f119" class="sx" style="transform:scaleX(1.0680)">Valor act</span></div><div class="t cell " style="left:922px;top:637.12px;line-height:18.75px;"><span id="f120" class="sx" style="transform:scaleX(0.9766)">%DEP anual</span></div><div class="t cell " style="left:997.4px;top:637.12px;line-height:18.75px;"><span id="f121" class="sx" style="transform:scaleX(0.9684)">Años</span></div><div class="t cell " style="left:1082px;top:637.12px;line-height:18.75px;"><span id="f122" class="sx" style="transform:scaleX(0.9986)">Solo Queremos <b>1</b> mes</span></div><div class="a" style="left:489.5px;top:391.3px;width:679.5px;height:133.07px;border:2px solid #2d5443"></div><div class="a" style="left:1165.5px;top:520.88px;width:5px;height:5px;background:#2d5443;border:1px solid #fff"></div><svg style="left:1265px;top:228px" width="10" height="8"><path d="M0.5 7.5L5 1L9.5 7.5Z" fill="#777"/></svg><div class="a" style="left:1266px;top:239.5px;width:8.5px;height:100px;background:#777;border-radius:4.5px"></div><svg style="left:1265px;top:641px" width="10" height="8"><path d="M0.5 0.5L5 7L9.5 0.5Z" fill="#777"/></svg><div class="a" style="left:0;top:650.5px;width:1280px;height:30px;background:#f0eef2"></div><svg style="left:27px;top:660px" width="6" height="10"><path d="M5 0.5L0.8 5L5 9.5" fill="none" stroke="#999" stroke-width="1.1"/></svg><svg style="left:57px;top:660px" width="6" height="10"><path d="M1 0.5L5.2 5L1 9.5" fill="none" stroke="#999" stroke-width="1.1"/></svg><div class="a" style="left:109px;top:650px;width:125px;height:26px;background:#fff;border-radius:0 0 5px 5px;box-shadow:0 1px 2px #d0d0d0"></div><div class="t" style="left:116px;top:655px;line-height:16px;font-size:13px;color:#1f1f1f;-webkit-text-stroke:0.35px #1f1f1f"><span id="f123" class="sx" style="transform:scaleX(0.9652)">Saldos al 31122023</span></div><div class="a" style="left:116px;top:671.5px;width:111px;height:2px;background:#1e6b45;border-radius:1px"></div><div class="a" style="left:238.5px;top:658px;width:1px;height:15px;background:#d0d0d0"></div><div class="t" style="left:249px;top:657px;line-height:16px;font-size:13px;color:#333"><span id="f124" class="sx" style="transform:scaleX(0.9715)">Hoja1</span></div><div class="a" style="left:294.5px;top:658px;width:1px;height:15px;background:#d0d0d0"></div><div class="a" style="left:334px;top:664.5px;width:11px;height:1.2px;background:#444"></div><div class="a" style="left:339px;top:659.5px;width:1.2px;height:11px;background:#444"></div><div class="a" style="left:769px;top:660.0px;width:2px;height:2px;background:#444;border-radius:1px"></div><div class="a" style="left:769px;top:663.5px;width:2px;height:2px;background:#444;border-radius:1px"></div><div class="a" style="left:769px;top:667.0px;width:2px;height:2px;background:#444;border-radius:1px"></div><svg style="left:789px;top:660px" width="7" height="10"><path d="M6.5 0.5L0.5 5L6.5 9.5Z" fill="#666"/></svg><div class="a" style="left:964px;top:661px;width:268px;height:7.5px;background:#777;border-radius:4px"></div><svg style="left:1251px;top:660px" width="7" height="10"><path d="M0.5 0.5L6.5 5L0.5 9.5Z" fill="#666"/></svg><div class="t" style="left:11px;top:683.5px;line-height:14px;font-size:11.5px;color:#333"><span id="f125" class="sx" style="transform:scaleX(0.9055)">Listo</span></div><svg style="left:77px;top:683px" width="14" height="15"><circle cx="6" cy="2.5" r="1.8" fill="none" stroke="#333" stroke-width="1"/><path d="M1 5.5L6 6.5L11 5.5M6 6.5V10L3 14M6 10L8 12" fill="none" stroke="#333" stroke-width="1"/><path d="M9 10L13 14M13 10L9 14" stroke="#333" stroke-width="1"/></svg><div class="t" style="left:93.5px;top:683.5px;line-height:14px;font-size:11.5px;color:#1f1f1f;font-weight:bold"><span id="f126" class="sx" style="transform:scaleX(0.8566)">Accesibilidad: es necesario investigar</span></div><div class="t" style="left:685px;top:683.5px;line-height:14px;font-size:11.5px;color:#333"><span id="f127" class="sx" style="transform:scaleX(0.9063)">Promedio: 110137,3915</span></div><div class="t" style="left:810.5px;top:683.5px;line-height:14px;font-size:11.5px;color:#333"><span id="f128" class="sx" style="transform:scaleX(0.9135)">Recuento: 32</span></div><div class="t" style="left:888.5px;top:683.5px;line-height:14px;font-size:11.5px;color:#333"><span id="f129" class="sx" style="transform:scaleX(0.8688)">Suma: 2312885,221</span></div><div class="a" style="left:996px;top:681px;width:37px;height:19px;background:#e2e2e2"></div><svg style="left:1008px;top:684px" width="13" height="13"><rect x="0.5" y="0.5" width="12" height="12" fill="none" stroke="#333"/><path d="M0.5 4.5H12.5M0.5 8.5H12.5M4.5 0.5V12.5M8.5 0.5V12.5" stroke="#333"/></svg><svg style="left:1046px;top:684px" width="13" height="13"><rect x="0.5" y="0.5" width="12" height="12" fill="none" stroke="#333" stroke-width="1.1"/><rect x="3" y="2.5" width="7" height="8" fill="none" stroke="#333" stroke-width="0.9"/><path d="M4.5 5H8.5M4.5 7H8.5" stroke="#333" stroke-width="0.8"/></svg><svg style="left:1083px;top:684px" width="13" height="13"><rect x="0.5" y="0.5" width="12" height="12" fill="none" stroke="#333" stroke-width="1.1"/><path d="M3.5 0.5V6.5H9.5V0.5" fill="none" stroke="#333" stroke-width="1.1"/></svg><div class="a" style="left:1113px;top:690.5px;width:8px;height:1px;background:#444"></div><div class="a" style="left:1126px;top:690.5px;width:94px;height:1px;background:#888"></div><div class="a" style="left:1171px;top:685px;width:4px;height:11px;background:#555;border-radius:1px"></div><div class="a" style="left:1224px;top:690.5px;width:8px;height:1px;background:#444"></div><div class="a" style="left:1227.5px;top:687px;width:1px;height:8px;background:#444"></div><div class="t" style="left:1243.5px;top:683.5px;line-height:14px;font-size:11.5px;color:#333"><span id="f130" class="sx" style="transform:scaleX(0.8893)">100 %</span></div></body></html>
